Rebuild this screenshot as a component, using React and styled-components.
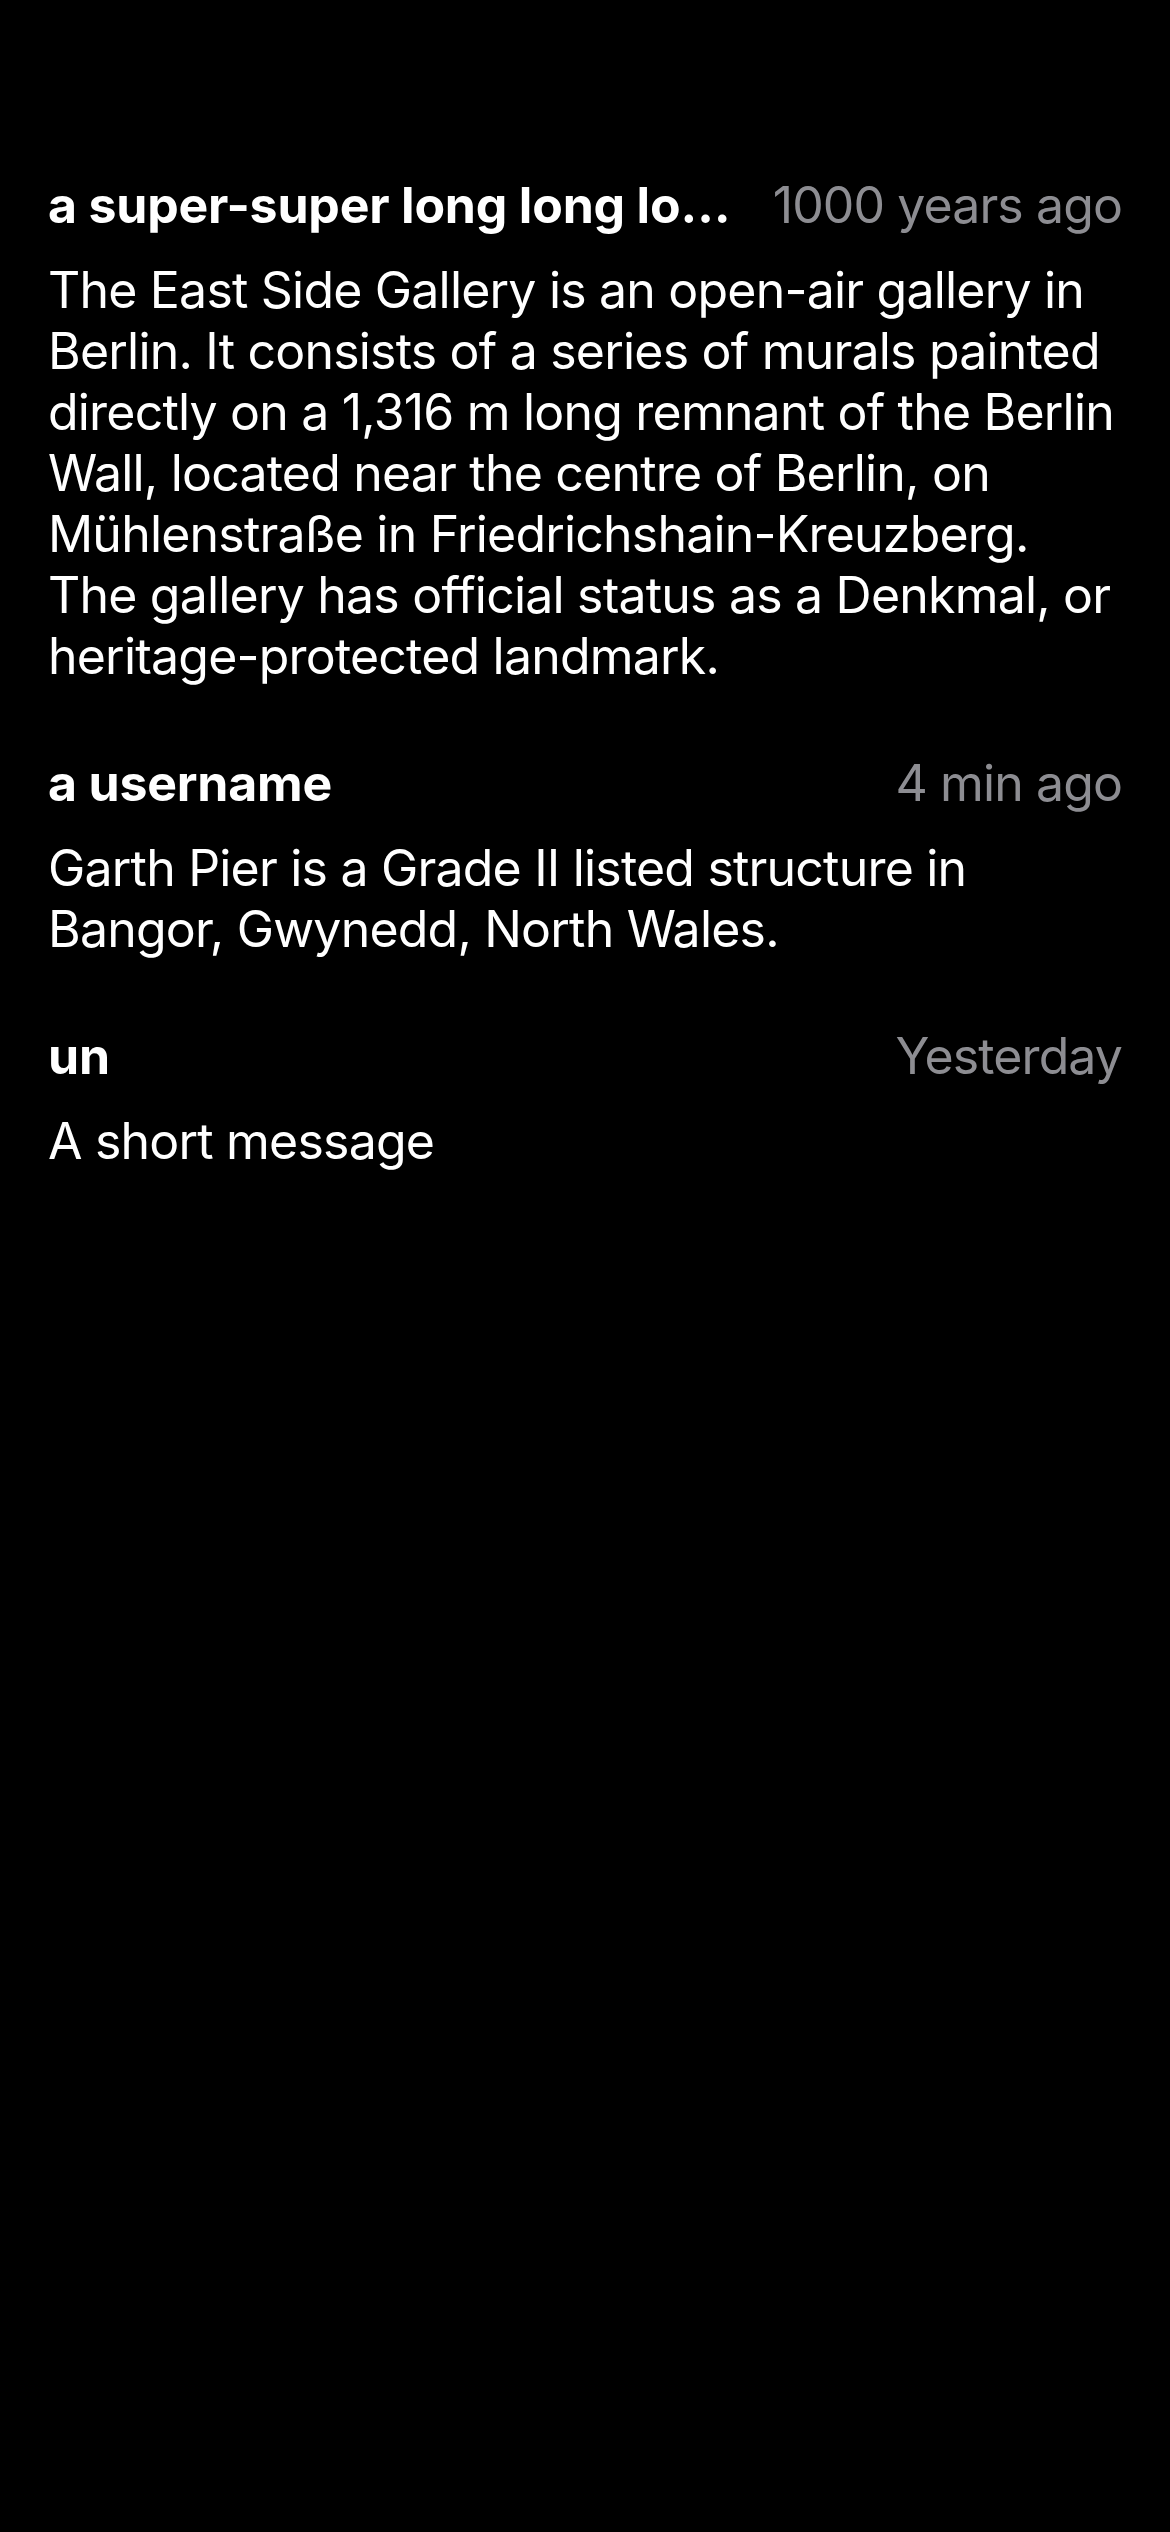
import React from "react";
import styled, { createGlobalStyle } from "styled-components";

const GlobalStyle = createGlobalStyle`
  html, body {
    margin: 0;
    padding: 0;
    background: #000;
  }
  body {
    font-family: Inter, "Noto Sans", "Liberation Sans", sans-serif;
    -webkit-font-smoothing: antialiased;
  }
`;

const messages = [
  {
    id: 1,
    author: "a super-super long long long long long username",
    time: "1000 years ago",
    text:
      "The East Side Gallery is an open-air gallery in Berlin. It consists of a series of murals painted directly on a 1,316 m long remnant of the Berlin Wall, located near the centre of Berlin, on Mühlenstraße in Friedrichshain-Kreuzberg. The gallery has official status as a Denkmal, or heritage-protected landmark.",
  },
  {
    id: 2,
    author: "a username",
    time: "4 min ago",
    text: "Garth Pier is a Grade II listed structure in Bangor, Gwynedd, North Wales.",
  },
  {
    id: 3,
    author: "un",
    time: "Yesterday",
    text: "A short message",
  },
];

const App = () => {
  return (
    <Screen>
      <GlobalStyle />
      <List>
        {messages.map((m) => (
          <Item key={m.id}>
            <Header>
              <Author>{m.author}</Author>
              <Time>{m.time}</Time>
            </Header>
            <Body>{m.text}</Body>
          </Item>
        ))}
      </List>
    </Screen>
  );
};

export default App;

const Screen = styled.div`
  width: 1170px;
  min-height: 2532px;
  background: #000;
  box-sizing: border-box;
  padding: 175px 48px 0;
`;

const List = styled.div`
  display: flex;
  flex-direction: column;
  gap: 66px;
`;

const Item = styled.div`
  display: flex;
  flex-direction: column;
  gap: 24px;
`;

const Header = styled.div`
  display: flex;
  align-items: center;
  justify-content: space-between;
  gap: 42px;
  line-height: 61px;
  font-size: 50px;
`;

const Author = styled.div`
  flex: 0 1 auto;
  min-width: 0;
  color: #fff;
  font-weight: 650;
  letter-spacing: -0.2px;
  white-space: nowrap;
  overflow: hidden;
  text-overflow: ellipsis;
`;

const Time = styled.div`
  flex: 0 0 auto;
  color: #8d8d92;
  font-weight: 400;
  letter-spacing: -0.9px;
`;

const Body = styled.p`
  margin: 0;
  color: #fff;
  font-size: 50px;
  line-height: 61px;
  letter-spacing: -0.8px;
`;
